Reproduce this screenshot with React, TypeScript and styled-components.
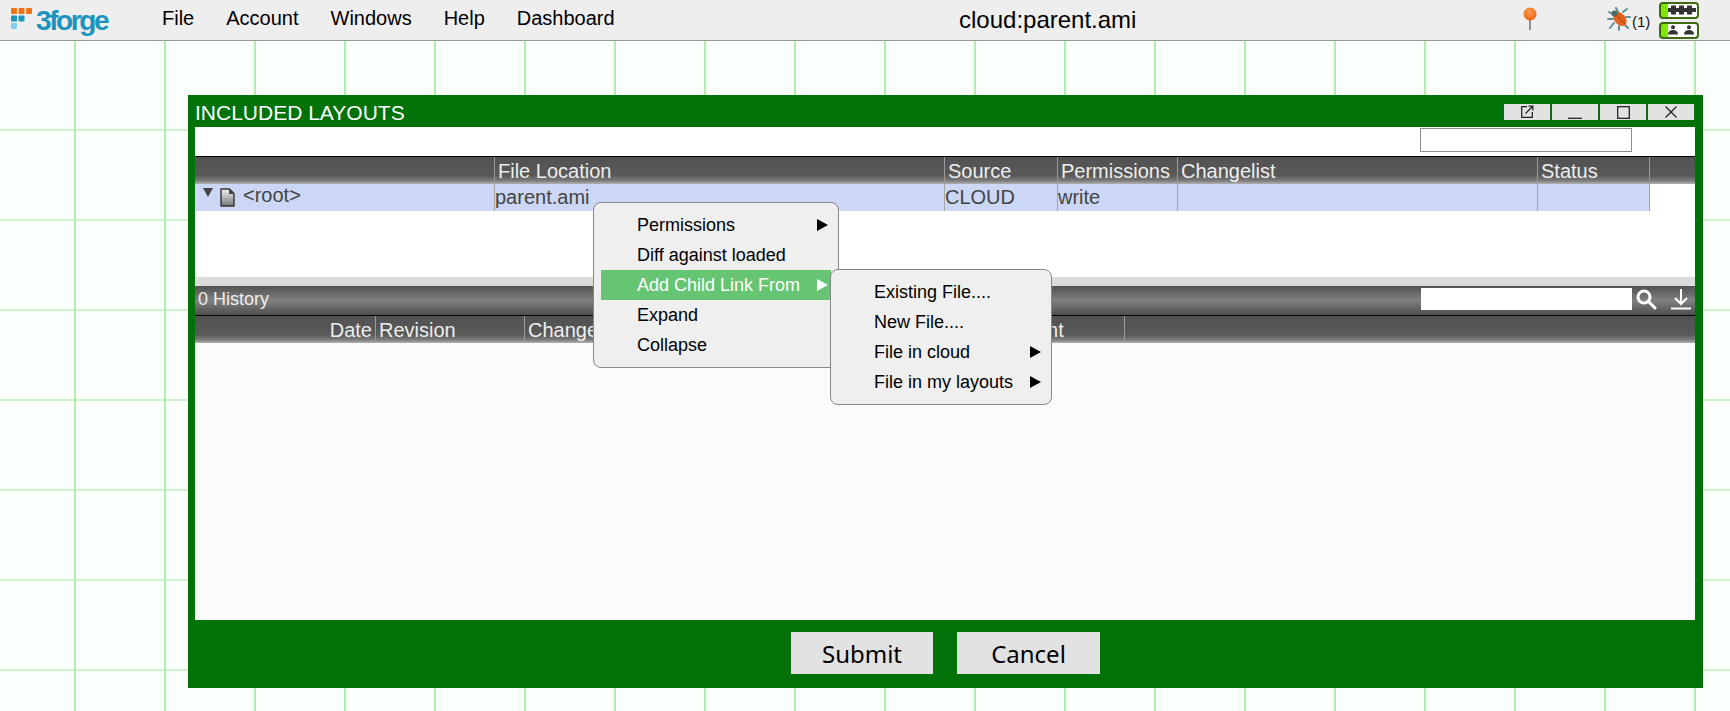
import React from 'react';
import styled, { createGlobalStyle } from 'styled-components';

const Global = createGlobalStyle`
  html, body { margin: 0; padding: 0; height: 100%; overflow: hidden; }
  #root { height: 100%; }
  * { box-sizing: border-box; }
  body { font-family: "Liberation Sans", Arial, sans-serif; }
`;

const Page = styled.div`
  width: 1730px;
  height: 711px;
  display: flex;
  flex-direction: column;
  position: relative;
  overflow: hidden;
`;

const Header = styled.header`
  height: 41px;
  flex: none;
  display: flex;
  align-items: center;
  background: #efeeef;
  border-bottom: 1px solid #999;
  position: relative;
`;

const Logo = styled.div`
  width: 146px;
  display: flex;
  align-items: center;
  gap: 3px;
  padding-left: 11px;
`;

const LogoText = styled.span`
  font-size: 28px;
  font-weight: 700;
  color: #1b95bf;
  letter-spacing: -2.4px;
  line-height: 1;
  margin-top: 2px;
`;

const Nav = styled.nav`
  display: flex;
  width: 813px;
  margin-top: -3px;
`;

const NavItem = styled.span`
  font-size: 20px;
  color: #000;
  padding-left: 16px;
  padding-right: 16px;
`;

const Title = styled.div`
  width: 178px;
  font-size: 24px;
  color: #000;
  white-space: nowrap;
  margin-top: -1px;
`;

const Right = styled.div`
  flex: 1;
  display: flex;
  align-items: center;
  padding-left: 386px;
`;

const Pin = styled.svg`
  width: 14px;
  height: 24px;
  margin-top: -3px;
`;

const Bug = styled.svg`
  width: 24px;
  height: 24px;
  margin-left: 70px;
  margin-top: -2px;
`;

const Count = styled.span`
  font-size: 15px;
  color: #111;
  margin-left: 1px;
  width: 27px;
  margin-top: 2px;
`;

const Pills = styled.div`
  display: flex;
  flex-direction: column;
  gap: 3px;
`;

const Pill = styled.div`
  width: 40px;
  height: 17px;
  border: 2px solid #3f6b10;
  border-radius: 4px;
  background: linear-gradient(to right, #7fe800 0 7px, #fff 7px);
  display: flex;
  align-items: center;
  justify-content: center;
  padding-left: 5px;
`;

const Desktop = styled.main`
  flex: 1;
  position: relative;
  background-color: #fbfffb;
  background-image:
    linear-gradient(to right, #aeeeae 2px, transparent 2px),
    linear-gradient(to bottom, #cdf3cd 2px, transparent 2px);
  background-size: 90px 90px;
  background-position: 74px 88px;
`;

const Window = styled.section`
  position: absolute;
  left: 188px;
  top: 54px;
  width: 1515px;
  height: 593px;
  background: #007208;
  display: flex;
  flex-direction: column;
`;

const TitleBar = styled.div`
  height: 32px;
  flex: none;
  display: flex;
  align-items: flex-start;
  justify-content: space-between;
  padding: 8px 9px 0 7px;
`;

const WindowTitle = styled.div`
  font-size: 21px;
  line-height: 20px;
  color: #fff;
  white-space: nowrap;
`;

const Controls = styled.div`
  display: flex;
  gap: 2px;
  margin-top: 1px;
`;

const Control = styled.div`
  width: 46px;
  height: 16px;
  background: #e2e2e2;
  display: flex;
  align-items: center;
  justify-content: center;
`;

const Body = styled.div`
  flex: 1;
  margin: 0 8px 0 7px;
  background: #fff;
  display: flex;
  flex-direction: column;
  min-height: 0;
`;

const FilterRow = styled.div`
  height: 29px;
  flex: none;
  padding: 1px 0 0 1225px;
`;

const FilterInput = styled.div`
  width: 212px;
  height: 24px;
  background: #fff;
  border: 1px solid #8c8c8c;
`;

const TableHead = styled.div`
  height: 28px;
  flex: none;
  display: flex;
  border-top: 1px solid #000;
  background: linear-gradient(to bottom, #525252 0, #595959 68%, #7c7c7c 88%, #b2b2b2 100%);
`;

const HeadCell = styled.div<{ $w: number; $right?: boolean }>`
  width: ${p => p.$w}px;
  flex: none;
  height: 100%;
  font-size: 20px;
  line-height: 28px;
  color: #eee;
  white-space: nowrap;
  overflow: hidden;
  padding: 0 3px;
  text-align: ${p => (p.$right ? 'right' : 'left')};
  border-right: 1px solid #9a9a9a;
`;

const Row = styled.div`
  width: 1455px;
  height: 27px;
  flex: none;
  display: flex;
  background: #cbd7f5;
`;

const Cell = styled.div<{ $w: number }>`
  width: ${p => p.$w}px;
  flex: none;
  font-size: 20px;
  line-height: 27px;
  color: #444;
  padding-left: 0;
  border-right: 1px solid #a6a6a6;
  white-space: nowrap;
  overflow: hidden;
`;

const TreeCell = styled(Cell)`
  display: flex;
  align-items: flex-start;
  line-height: 22px;
  padding-left: 8px;
`;

const Twisty = styled.span`
  width: 0;
  height: 0;
  margin-top: 4px;
  border-left: 5.5px solid transparent;
  border-right: 5.5px solid transparent;
  border-top: 9px solid #444;
`;

const FileIcon = styled.svg`
  width: 15px;
  height: 19px;
  margin: 4px 8px 0 7px;
`;

const Spacer = styled.div`
  height: 66px;
  flex: none;
`;

const Divider = styled.div`
  height: 9px;
  flex: none;
  background: #dcdcdc;
`;

const HistoryBar = styled.div`
  height: 30px;
  flex: none;
  display: flex;
  align-items: flex-start;
  border-bottom: 1px solid #000;
  background: linear-gradient(to bottom, #525252 0, #808080 50%, #4e4e4e 100%);
  padding: 2px 3px 0 3px;
`;

const HistoryLabel = styled.span`
  font-size: 18px;
  line-height: 22px;
  color: #eee;
  width: 1223px;
`;

const HistoryInput = styled.div`
  width: 211px;
  height: 22px;
  background: #fff;
`;

const BarIcon = styled.svg`
  width: 22px;
  height: 22px;
  margin-left: 3px;
`;

const BarIconWide = styled(BarIcon)`
  margin-left: 13px;
`;

const HistoryHead = styled(TableHead)`
  height: 27px;
  border-top: 0;
`;

const HistoryBody = styled.div`
  flex: 1;
  background: #fbfbfb;
`;

const Footer = styled.div`
  height: 68px;
  flex: none;
  display: flex;
  justify-content: center;
  gap: 24px;
  padding: 12px 0 0 0;
`;

const ActionButton = styled.button<{ $w: number }>`
  width: ${p => p.$w}px;
  height: 42px;
  border: 0;
  padding: 0;
  background: #e2e2e2;
  color: #000;
  font-family: "Noto Sans", "Open Sans", sans-serif;
  font-size: 24px;
`;

const Menu = styled.div<{ $x: number; $y: number; $w: number }>`
  position: absolute;
  left: ${p => p.$x}px;
  top: ${p => p.$y}px;
  width: ${p => p.$w}px;
  padding: 7px;
  background: #efefef;
  border: 1px solid #888;
  border-radius: 8px;
`;

const MenuRow = styled.div<{ $active?: boolean }>`
  height: 30px;
  display: flex;
  align-items: center;
  justify-content: space-between;
  padding: 0 3px 0 36px;
  font-size: 18px;
  white-space: nowrap;
  color: ${p => (p.$active ? '#fff' : '#000')};
  background: ${p => (p.$active ? '#66c572' : 'transparent')};
`;

const MenuArrow = styled.span<{ $active?: boolean }>`
  width: 0;
  height: 0;
  border-top: 6px solid transparent;
  border-bottom: 6px solid transparent;
  border-left: 11px solid ${p => (p.$active ? '#fff' : '#000')};
`;

const Person = () => (
  <svg width="28" height="10" viewBox="0 0 28 10">
    <g fill="#333">
      <circle cx="5" cy="2.200" r="2" /><path d="M0 9.500c0-3 2-4.500 5-4.500s5 1.500 5 4.500z" />
      <circle cx="21" cy="2.200" r="2" /><path d="M16 9.500c0-3 2-4.500 5-4.500s5 1.500 5 4.500z" />
    </g>
  </svg>
);

const Train = () => (
  <svg width="28" height="10" viewBox="0 0 28 10">
    <g fill="#333">
      <path d="M0 3h28v4H0z" />
      <path d="M3 0.500h5v9H3zM11 0.500h5v9h-5zM19 0.500h5v9h-5z" />
    </g>
  </svg>
);

const columnsTop = [300, 450, 113, 120, 360, 112];

const MainMenu = () => (
  <Menu $x={593} $y={161} $w={246}>
    <MenuRow>Permissions<MenuArrow /></MenuRow>
    <MenuRow>Diff against loaded</MenuRow>
    <MenuRow $active>Add Child Link From<MenuArrow $active /></MenuRow>
    <MenuRow>Expand</MenuRow>
    <MenuRow>Collapse</MenuRow>
  </Menu>
);

const SubMenu = () => (
  <Menu $x={830} $y={228} $w={222}>
    <MenuRow>Existing File....</MenuRow>
    <MenuRow>New File....</MenuRow>
    <MenuRow>File in cloud<MenuArrow /></MenuRow>
    <MenuRow>File in my layouts<MenuArrow /></MenuRow>
  </Menu>
);

export default function App() {
  return (
    <Page>
      <Global />
      <Header>
        <Logo>
          <svg width="22" height="24" viewBox="0 0 22 24">
            <g fill="#f47216">
              <rect x="0" y="0" width="6" height="6" rx="1" />
              <rect x="7.500" y="0" width="6" height="6" rx="1" />
              <rect x="15" y="0" width="6" height="6" rx="1" />
            </g>
            <g fill="#1b95bf">
              <rect x="0" y="7.500" width="6" height="6" rx="1" />
              <rect x="7.500" y="7.500" width="6" height="6" rx="1" />
            </g>
            <rect x="0" y="15" width="6" height="6" rx="1" fill="#7fd0f5" />
          </svg>
          <LogoText>3forge</LogoText>
        </Logo>
        <Nav>
          <NavItem>File</NavItem>
          <NavItem>Account</NavItem>
          <NavItem>Windows</NavItem>
          <NavItem>Help</NavItem>
          <NavItem>Dashboard</NavItem>
        </Nav>
        <Title>cloud:parent.ami</Title>
        <Right>
          <Pin viewBox="0 0 14 24">
            <defs>
              <radialGradient id="pinBall" cx="45%" cy="35%" r="70%">
                <stop offset="0" stopColor="#fb9a4a" />
                <stop offset="1" stopColor="#ee5f10" />
              </radialGradient>
            </defs>
            <rect x="6.200" y="11" width="1.600" height="12" fill="#777" />
            <circle cx="7" cy="7" r="6.500" fill="url(#pinBall)" />
          </Pin>
          <Bug viewBox="0 0 24 24">
            <g stroke="#5c9196" strokeWidth="2" fill="none" strokeLinecap="round">
              <path d="M7 8L2 5M6 12L1 12M7 16L3 21M11 5L9 1M16 5L20 2M19 10L23 10M17 17L21 21M12 19L12 23" />
            </g>
            <ellipse cx="13" cy="12" rx="5.500" ry="8" transform="rotate(-40 13 12)" fill="#e0621c" />
            <circle cx="7.500" cy="6.500" r="3" fill="#4a6a6c" />
            <path d="M9 8l9 9" stroke="#a84510" strokeWidth="1" />
          </Bug>
          <Count>(1)</Count>
          <Pills>
            <Pill><Train /></Pill>
            <Pill><Person /></Pill>
          </Pills>
        </Right>
      </Header>
      <Desktop>
        <Window>
          <TitleBar>
            <WindowTitle>INCLUDED LAYOUTS</WindowTitle>
            <Controls>
              <Control>
                <svg width="14" height="14" viewBox="0 0 14 14" fill="none" stroke="#222" strokeWidth="1.300">
                  <path d="M7 1.700H1.700V12.300H12.300V7M5.500 8.500L12.500 1.500M8.500 1.200H12.800V5.500" />
                </svg>
              </Control>
              <Control>
                <svg width="14" height="14" viewBox="0 0 14 14" fill="none" stroke="#333" strokeWidth="1.400">
                  <path d="M0 13.300H14" />
                </svg>
              </Control>
              <Control>
                <svg width="13" height="13" viewBox="0 0 13 13" fill="none" stroke="#222" strokeWidth="1.300">
                  <rect x="0.700" y="0.700" width="11.600" height="11.600" />
                </svg>
              </Control>
              <Control>
                <svg width="14" height="14" viewBox="0 0 14 14" fill="none" stroke="#222" strokeWidth="1.300">
                  <path d="M1.500 1.500L12.500 12.500M12.500 1.500L1.500 12.500" />
                </svg>
              </Control>
            </Controls>
          </TitleBar>
          <Body>
            <FilterRow><FilterInput /></FilterRow>
            <TableHead>
              <HeadCell $w={columnsTop[0]} />
              <HeadCell $w={columnsTop[1]}>File Location</HeadCell>
              <HeadCell $w={columnsTop[2]}>Source</HeadCell>
              <HeadCell $w={columnsTop[3]}>Permissions</HeadCell>
              <HeadCell $w={columnsTop[4]}>Changelist</HeadCell>
              <HeadCell $w={columnsTop[5]}>Status</HeadCell>
            </TableHead>
            <Row>
              <TreeCell $w={columnsTop[0]}>
                <Twisty />
                <FileIcon viewBox="0 0 15 19">
                  <defs>
                    <linearGradient id="fileFill" x1="0" y1="0" x2="0" y2="1">
                      <stop offset="0" stopColor="#f2f2f2" />
                      <stop offset="1" stopColor="#777" />
                    </linearGradient>
                  </defs>
                  <path d="M1 1H9.500L14 5.500V18H1Z" fill="url(#fileFill)" stroke="#333" strokeWidth="1.400" strokeLinejoin="round" />
                  <path d="M9 1V6H14Z" fill="#444" />
                </FileIcon>
                &lt;root&gt;
              </TreeCell>
              <Cell $w={columnsTop[1]}>parent.ami</Cell>
              <Cell $w={columnsTop[2]}>CLOUD</Cell>
              <Cell $w={columnsTop[3]}>write</Cell>
              <Cell $w={columnsTop[4]} />
              <Cell $w={columnsTop[5]} />
            </Row>
            <Spacer />
            <Divider />
            <HistoryBar>
              <HistoryLabel>0 History</HistoryLabel>
              <HistoryInput />
              <BarIcon viewBox="0 0 22 22" fill="none" stroke="#fff" strokeWidth="3">
                <circle cx="9" cy="9" r="6" />
                <path d="M13 13L20 20" strokeLinecap="round" />
              </BarIcon>
              <BarIconWide viewBox="0 0 22 22" fill="none" stroke="#fff" strokeWidth="2">
                <path d="M11 1V15M5 10L11 16L17 10" />
                <path d="M1 20.500H21" />
              </BarIconWide>
            </HistoryBar>
            <HistoryHead>
              <HeadCell $w={181} $right>Date</HeadCell>
              <HeadCell $w={149}>Revision</HeadCell>
              <HeadCell $w={449}>Changelist</HeadCell>
              <HeadCell $w={151}>Comment</HeadCell>
            </HistoryHead>
            <HistoryBody />
          </Body>
          <Footer>
            <ActionButton $w={142}>Submit</ActionButton>
            <ActionButton $w={143}>Cancel</ActionButton>
          </Footer>
        </Window>
        <MainMenu />
        <SubMenu />
      </Desktop>
    </Page>
  );
}
